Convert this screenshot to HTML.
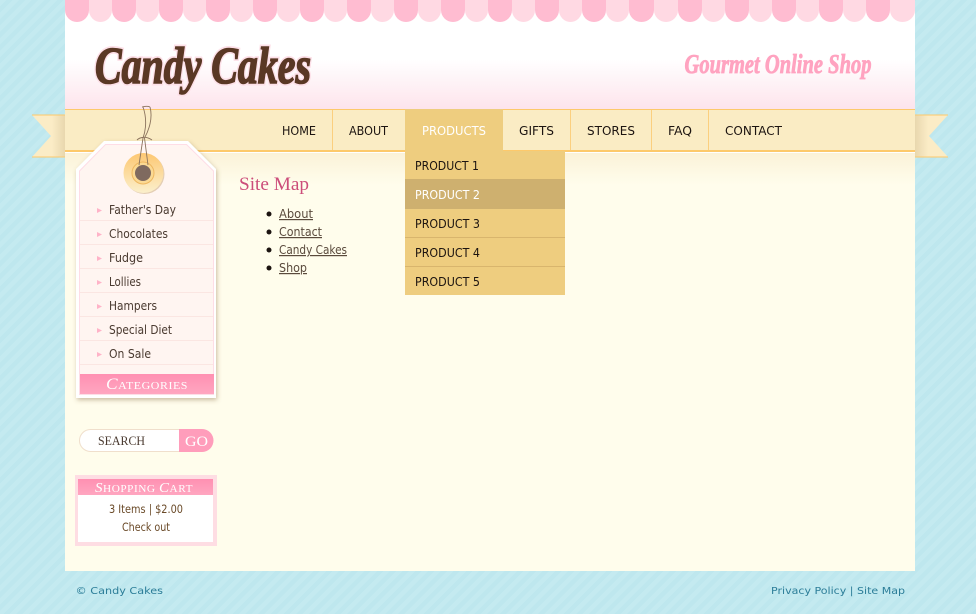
<!DOCTYPE html>
<html><head><meta charset="utf-8"><title>Candy Cakes</title>
<style>
html,body{margin:0;padding:0;width:976px;height:614px;overflow:hidden;background:#bfe8ef}
svg{display:block}
text{font-family:"DejaVu Sans","Liberation Sans",sans-serif;font-size:12px;fill:#111}
.n{font-size:12.500px;fill:#1c1410}
.s{fill:#4a3a30}
.l{fill:#5a4a3c;text-decoration:underline}
.f{font-size:10px;fill:#2b7d98}
.c{font-size:11.500px;fill:#6a4a28}
.v{font-family:"Liberation Serif",serif;fill:#fff}
</style></head><body>
<svg width="976" height="614" viewBox="0 0 976 614" xmlns="http://www.w3.org/2000/svg">
<defs>
<pattern id="st" width="9" height="9" patternUnits="userSpaceOnUse" patternTransform="rotate(45)">
<rect width="9" height="9" fill="#bee7ee"/><rect width="4.500" height="9" fill="#c4eaf0"/></pattern>
<linearGradient id="hd" x1="0" y1="0" x2="0" y2="1"><stop offset="0" stop-color="#fff"/><stop offset=".55" stop-color="#fff"/><stop offset="1" stop-color="#fde4ec"/></linearGradient>
<linearGradient id="ct" x1="0" y1="0" x2="0" y2="1"><stop offset="0" stop-color="#fbf2d8"/><stop offset="1" stop-color="#fffdec"/></linearGradient>
<linearGradient id="rl" x1="0" y1="0" x2="1" y2="0"><stop offset="0" stop-color="#fbecc6"/><stop offset=".6" stop-color="#fbecc6"/><stop offset="1" stop-color="#e8d7ae"/></linearGradient>
<linearGradient id="rr" x1="0" y1="0" x2="1" y2="0"><stop offset="0" stop-color="#e8d7ae"/><stop offset=".4" stop-color="#fbecc6"/><stop offset="1" stop-color="#fbecc6"/></linearGradient>
<linearGradient id="hole" x1="0" y1="0" x2="0" y2="1"><stop offset="0" stop-color="#fdc772"/><stop offset="1" stop-color="#fbefcc"/></linearGradient>
<linearGradient id="pk" x1="0" y1="0" x2="0" y2="1"><stop offset="0" stop-color="#ff90b2"/><stop offset="1" stop-color="#ffa6c0"/></linearGradient>
<filter id="sh" x="-10%" y="-10%" width="120%" height="120%"><feDropShadow dx="1" dy="2" stdDeviation="2.500" flood-color="#8a6a40" flood-opacity=".45"/></filter>
</defs>

<rect width="976" height="614" fill="url(#st)"/>

<!-- ribbons -->
<path d="M32 115H65V157H32L51 136Z" fill="url(#rl)"/>
<path d="M32 115H65M32 157H65" stroke="#fdc96b" fill="none"/>
<path d="M915 115H948L929 136L948 157H915Z" fill="url(#rr)"/>
<path d="M915 115H948M915 157H948" stroke="#fdc96b" fill="none"/>

<!-- page -->
<rect x="65" y="0" width="850" height="571" fill="#fffdec"/>
<rect x="65" y="0" width="850" height="109" fill="url(#hd)"/>
<rect x="65" y="153" width="850" height="32" fill="url(#ct)"/>

<!-- awning -->
<g id="awn">
<path d="M65 0H89V10A12 12 0 0 1 65 10Z" fill="#ffbcd1"/><path d="M89 0H112V10A11.500 12 0 0 1 89 10Z" fill="#ffd9e3"/>
<path d="M112 0H136V10A12 12 0 0 1 112 10Z" fill="#ffbcd1"/><path d="M136 0H159V10A11.500 12 0 0 1 136 10Z" fill="#ffd9e3"/>
<path d="M159 0H183V10A12 12 0 0 1 159 10Z" fill="#ffbcd1"/><path d="M183 0H206V10A11.500 12 0 0 1 183 10Z" fill="#ffd9e3"/>
<path d="M206 0H230V10A12 12 0 0 1 206 10Z" fill="#ffbcd1"/><path d="M230 0H253V10A11.500 12 0 0 1 230 10Z" fill="#ffd9e3"/>
<path d="M253 0H277V10A12 12 0 0 1 253 10Z" fill="#ffbcd1"/><path d="M277 0H300V10A11.500 12 0 0 1 277 10Z" fill="#ffd9e3"/>
<path d="M300 0H324V10A12 12 0 0 1 300 10Z" fill="#ffbcd1"/><path d="M324 0H347V10A11.500 12 0 0 1 324 10Z" fill="#ffd9e3"/>
<path d="M347 0H371V10A12 12 0 0 1 347 10Z" fill="#ffbcd1"/><path d="M371 0H394V10A11.500 12 0 0 1 371 10Z" fill="#ffd9e3"/>
<path d="M394 0H418V10A12 12 0 0 1 394 10Z" fill="#ffbcd1"/><path d="M418 0H441V10A11.500 12 0 0 1 418 10Z" fill="#ffd9e3"/>
<path d="M441 0H465V10A12 12 0 0 1 441 10Z" fill="#ffbcd1"/><path d="M465 0H488V10A11.500 12 0 0 1 465 10Z" fill="#ffd9e3"/>
<path d="M488 0H512V10A12 12 0 0 1 488 10Z" fill="#ffbcd1"/><path d="M512 0H535V10A11.500 12 0 0 1 512 10Z" fill="#ffd9e3"/>
<path d="M535 0H559V10A12 12 0 0 1 535 10Z" fill="#ffbcd1"/><path d="M559 0H582V10A11.500 12 0 0 1 559 10Z" fill="#ffd9e3"/>
<path d="M582 0H606V10A12 12 0 0 1 582 10Z" fill="#ffbcd1"/><path d="M606 0H629V10A11.500 12 0 0 1 606 10Z" fill="#ffd9e3"/>
<path d="M629 0H654V10A12.500 12 0 0 1 629 10Z" fill="#ffbcd1"/><path d="M654 0H678V10A12 12 0 0 1 654 10Z" fill="#ffd9e3"/>
<path d="M678 0H702V10A12 12 0 0 1 678 10Z" fill="#ffbcd1"/><path d="M702 0H725V10A11.500 12 0 0 1 702 10Z" fill="#ffd9e3"/>
<path d="M725 0H749V10A12 12 0 0 1 725 10Z" fill="#ffbcd1"/><path d="M749 0H772V10A11.500 12 0 0 1 749 10Z" fill="#ffd9e3"/>
<path d="M772 0H796V10A12 12 0 0 1 772 10Z" fill="#ffbcd1"/><path d="M796 0H819V10A11.500 12 0 0 1 796 10Z" fill="#ffd9e3"/>
<path d="M819 0H843V10A12 12 0 0 1 819 10Z" fill="#ffbcd1"/><path d="M843 0H866V10A11.500 12 0 0 1 843 10Z" fill="#ffd9e3"/>
<path d="M866 0H890V10A12 12 0 0 1 866 10Z" fill="#ffbcd1"/><path d="M890 0H915V10A12.500 12 0 0 1 890 10Z" fill="#ffd9e3"/>
</g>

<!-- logo -->
<text x="95" y="83" textLength="216" lengthAdjust="spacingAndGlyphs" style="font-family:'Liberation Serif',serif;font-size:52px;font-weight:bold;font-style:italic;fill:#fde0e8;stroke:#fde0e8;stroke-width:5px">Candy Cakes</text>
<text x="95" y="83" textLength="216" lengthAdjust="spacingAndGlyphs" style="font-family:'Liberation Serif',serif;font-size:52px;font-weight:bold;font-style:italic;fill:#5a3825;stroke:#5a3825;stroke-width:1.600px">Candy Cakes</text>
<text x="684.500" y="73" textLength="187" lengthAdjust="spacingAndGlyphs" style="font-family:'Liberation Serif',serif;font-size:27px;font-weight:bold;font-style:italic;fill:#ffa3c0;stroke:#ffa3c0;stroke-width:.8px">Gourmet Online Shop</text>

<!-- nav -->
<rect x="65" y="109" width="850" height="42" fill="#faecc4"/>
<rect x="65" y="109" width="850" height="1" fill="#fdc96b"/>
<rect x="65" y="150" width="850" height="2" fill="#fdc96b"/>
<rect x="65" y="152" width="850" height="1" fill="#fff"/>
<rect x="405" y="109" width="98" height="42" fill="#eecd7f"/>
<path d="M332.500 110V150M570.500 110V150M651.500 110V150M708.500 110V150" stroke="#fbcf7e"/>
<text class="n" x="282" y="135" textLength="34" lengthAdjust="spacingAndGlyphs">HOME</text>
<text class="n" x="349" y="135" textLength="39" lengthAdjust="spacingAndGlyphs">ABOUT</text>
<text class="n" x="422" y="135" textLength="64" lengthAdjust="spacingAndGlyphs" style="fill:#fff">PRODUCTS</text>
<text class="n" x="519" y="135" textLength="35" lengthAdjust="spacingAndGlyphs">GIFTS</text>
<text class="n" x="587" y="135" textLength="48" lengthAdjust="spacingAndGlyphs">STORES</text>
<text class="n" x="668" y="135" textLength="24" lengthAdjust="spacingAndGlyphs">FAQ</text>
<text class="n" x="725" y="135" textLength="57" lengthAdjust="spacingAndGlyphs">CONTACT</text>

<!-- dropdown -->
<rect x="405" y="151" width="160" height="144" fill="#eecd7f"/>
<rect x="405" y="179" width="160" height="30" fill="#ceb06f"/>
<rect x="405" y="237" width="160" height="1" fill="#d8b56d"/>
<rect x="405" y="266" width="160" height="1" fill="#d8b56d"/>
<text class="n" x="415" y="170" textLength="64" lengthAdjust="spacingAndGlyphs">PRODUCT 1</text>
<text class="n" x="415" y="199" textLength="65" lengthAdjust="spacingAndGlyphs" style="fill:#fff">PRODUCT 2</text>
<text class="n" x="415" y="228" textLength="65" lengthAdjust="spacingAndGlyphs">PRODUCT 3</text>
<text class="n" x="415" y="257" textLength="65" lengthAdjust="spacingAndGlyphs">PRODUCT 4</text>
<text class="n" x="415" y="286" textLength="65" lengthAdjust="spacingAndGlyphs">PRODUCT 5</text>

<!-- content -->
<text x="239" y="190" textLength="70" lengthAdjust="spacingAndGlyphs" style="font-family:'Liberation Serif',serif;font-size:19px;fill:#cc4d7a">Site Map</text>
<circle cx="269" cy="214" r="2.500" fill="#1c1410"/><circle cx="269" cy="232" r="2.500" fill="#1c1410"/><circle cx="269" cy="250" r="2.500" fill="#1c1410"/><circle cx="269" cy="268" r="2.500" fill="#1c1410"/>
<text class="l" x="279" y="218" textLength="34" lengthAdjust="spacingAndGlyphs">About</text>
<text class="l" x="279" y="236" textLength="43" lengthAdjust="spacingAndGlyphs">Contact</text>
<text class="l" x="279" y="254" textLength="68" lengthAdjust="spacingAndGlyphs">Candy Cakes</text>
<text class="l" x="279" y="272" textLength="28" lengthAdjust="spacingAndGlyphs">Shop</text>

<!-- tag -->
<path d="M104 141H188L216 169V398H76V169Z" fill="#fff" filter="url(#sh)"/>
<path d="M105.500 144.500H186.500L213.500 171V394.500H79.500V171Z" fill="#fff5f1" stroke="#fedde6"/>
<path d="M80 220.500H213M80 244.500H213M80 268.500H213M80 292.500H213M80 316.500H213M80 340.500H213M80 364.500H213" stroke="#fbe6e2"/>
<rect x="80" y="374" width="134" height="20" fill="url(#pk)"/>
<circle cx="144.500" cy="174" r="20" fill="#c9a878" opacity=".5"/>
<circle cx="143.500" cy="173" r="20" fill="url(#hole)"/>
<circle cx="143" cy="173" r="11" fill="#fbd993" stroke="#eeb75f"/>
<circle cx="143" cy="173" r="8" fill="#7f6a5f"/>
<path d="M139 165L143 138C146 130 147 118 143 107M148 165L144.500 138C149 130 153 118 150 107M137 140C140 137 146 136 152 140M150 107C148 106 146 106 142 107" fill="none" stroke="#8a725c" stroke-width=".9"/>

<path d="M97 208L102 210.500L97 213ZM97 232L102 234.500L97 237ZM97 256L102 258.500L97 261ZM97 280L102 282.500L97 285ZM97 304L102 306.500L97 309ZM97 328L102 330.500L97 333ZM97 352L102 354.500L97 357Z" fill="#ffb3c8"/>
<text class="s" x="109" y="214" textLength="67" lengthAdjust="spacingAndGlyphs">Father's Day</text>
<text class="s" x="109" y="238" textLength="59" lengthAdjust="spacingAndGlyphs">Chocolates</text>
<text class="s" x="109" y="262" textLength="34" lengthAdjust="spacingAndGlyphs">Fudge</text>
<text class="s" x="109" y="286" textLength="32" lengthAdjust="spacingAndGlyphs">Lollies</text>
<text class="s" x="109" y="310" textLength="48" lengthAdjust="spacingAndGlyphs">Hampers</text>
<text class="s" x="109" y="334" textLength="63" lengthAdjust="spacingAndGlyphs">Special Diet</text>
<text class="s" x="109" y="358" textLength="42" lengthAdjust="spacingAndGlyphs">On Sale</text>
<text class="v" x="106" y="389" textLength="82" lengthAdjust="spacingAndGlyphs" style="font-size:11px;letter-spacing:.5px"><tspan style="font-size:16px;font-style:italic">C</tspan>ATEGORIES</text>

<!-- search -->
<rect x="79.500" y="429.500" width="133" height="22" rx="11" fill="#fff" stroke="#f0dfcc"/>
<path d="M179 429H202A11.500 11.500 0 0 1 202 452H179Z" fill="#ff9dbb"/>
<text x="98" y="445" textLength="47" lengthAdjust="spacingAndGlyphs" style="font-family:'Liberation Serif',serif;font-size:13px;fill:#4a3a30">SEARCH</text>
<text class="v" x="185" y="446" textLength="23" lengthAdjust="spacingAndGlyphs" style="font-size:15px">GO</text>

<!-- cart -->
<rect x="75" y="475" width="142" height="71" fill="#fedde3"/>
<rect x="78" y="479" width="135" height="63" fill="#fff"/>
<rect x="78" y="479" width="135" height="16" fill="url(#pk)"/>
<text class="v" x="95" y="492" textLength="98" lengthAdjust="spacingAndGlyphs" style="font-size:10.500px;letter-spacing:.5px"><tspan style="font-size:14px;font-style:italic">S</tspan>HOPPING <tspan style="font-size:14px;font-style:italic">C</tspan>ART</text>
<text class="c" x="109" y="513" textLength="74" lengthAdjust="spacingAndGlyphs">3 Items | $2.00</text>
<text class="c" x="122" y="531" textLength="48" lengthAdjust="spacingAndGlyphs">Check out</text>

<!-- footer -->
<text class="f" x="75.500" y="594" textLength="87.500" lengthAdjust="spacingAndGlyphs">© Candy Cakes</text>
<text class="f" x="771" y="594" textLength="134" lengthAdjust="spacingAndGlyphs">Privacy Policy | Site Map</text>
</svg>
</body></html>
